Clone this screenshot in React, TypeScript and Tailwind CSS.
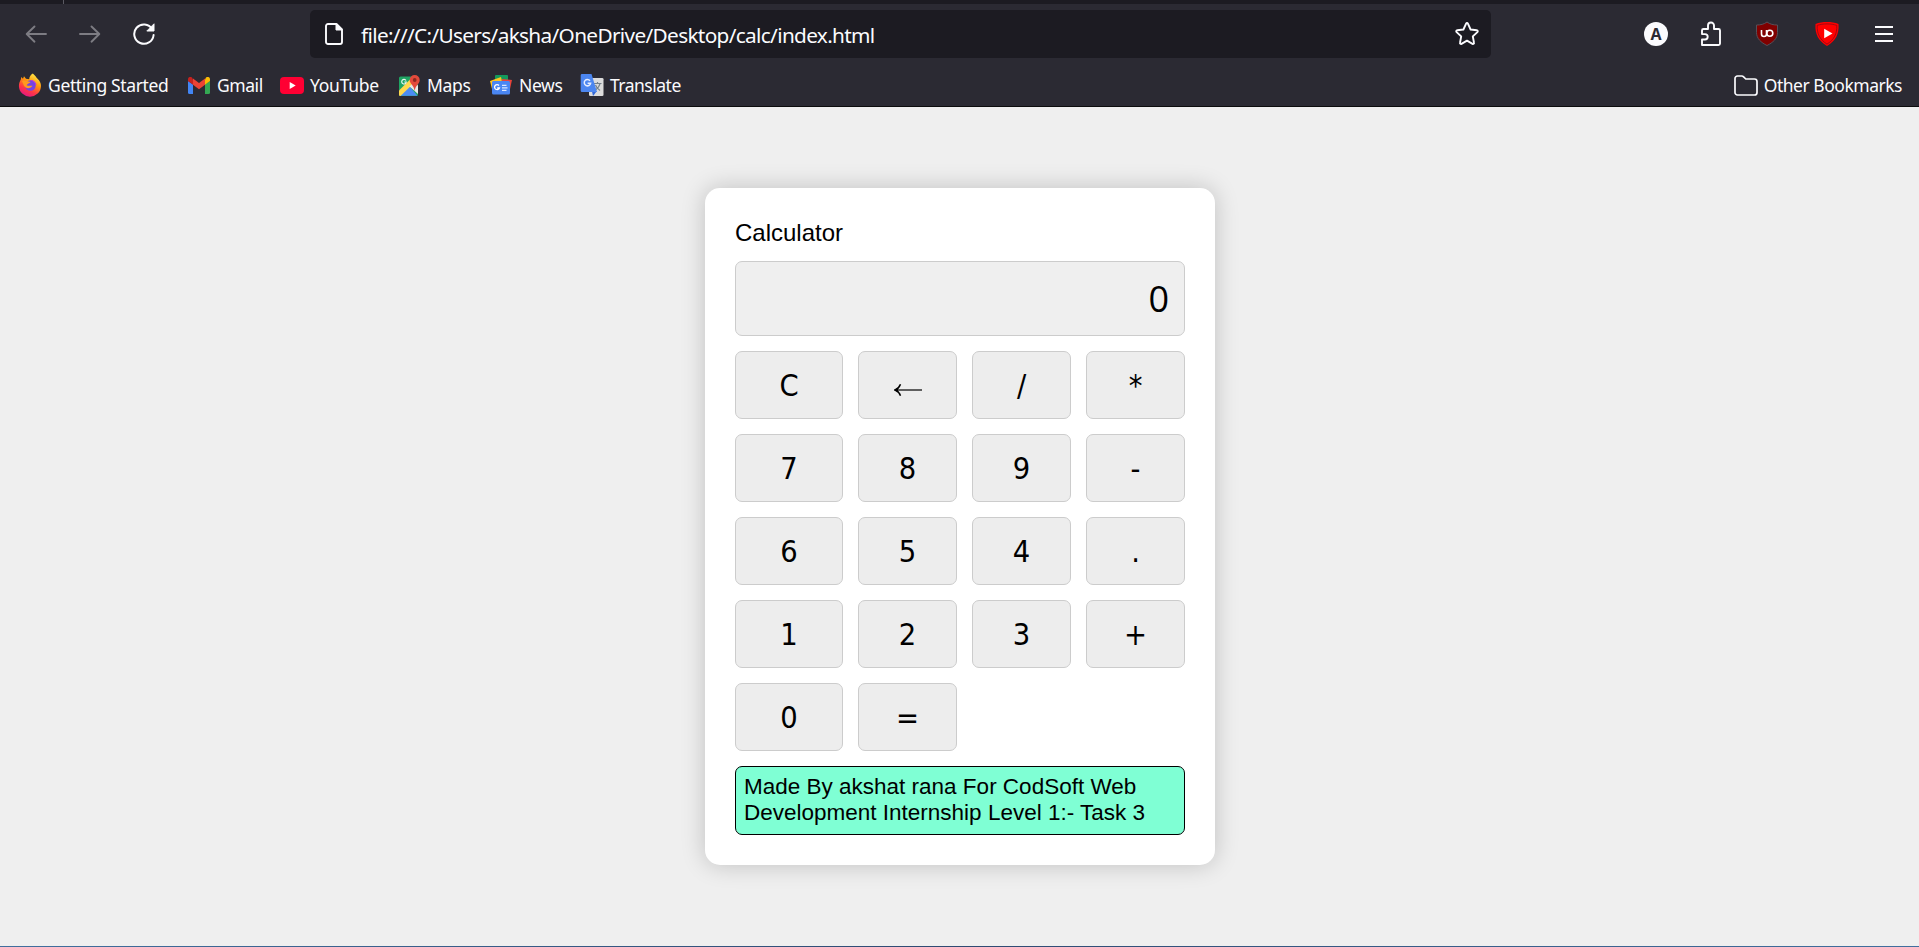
import React from 'react';

const ui = "font-['Noto_Sans',sans-serif]";

function Back({ flip = false }: { flip?: boolean }) {
  return (
    <svg width="24" height="24" viewBox="0 0 24 24" className={flip ? '-scale-x-100' : ''} fill="none" stroke="#7d7c83" strokeWidth="1.9" strokeLinecap="round" strokeLinejoin="round">
      <path d="M22 12H3M10.5 4.5 2.7 12l7.8 7.7" />
    </svg>
  );
}

function Reload() {
  return (
    <svg width="24" height="24" viewBox="0 0 24 24" fill="none" stroke="#fbfbfe" strokeWidth="2" strokeLinecap="round">
      <path d="M20.2 7A9.700 9.700 0 1 0 21.600 13" />
      <path d="M22 2.200V9h-6.800z" fill="#fbfbfe" strokeWidth="1" strokeLinejoin="round" />
    </svg>
  );
}

function Page() {
  return (
    <svg width="18" height="22" viewBox="0 0 18 22" fill="none" stroke="#fbfbfe" strokeWidth="1.9" strokeLinejoin="round">
      <path d="M3 1h8.500L17 6.500V19a2 2 0 0 1-2 2H3a2 2 0 0 1-2-2V3a2 2 0 0 1 2-2z" />
      <path d="M11 1v6h6z" fill="#fbfbfe" strokeWidth="1" />
    </svg>
  );
}

function Star() {
  return (
    <svg width="26" height="26" viewBox="0 0 26 26" fill="none" stroke="#fbfbfe" strokeWidth="1.9" strokeLinejoin="round">
      <path d="M12.100 2.600c.4-.8 1.400-.8 1.800 0l2.700 5.900 6.200.8c1 .1 1.300 1.100.6 1.800l-4.600 4.300 1.200 6.300c.2.9-.7 1.500-1.500 1.100L13 19.700l-5.500 3.100c-.8.4-1.700-.2-1.500-1.100l1.200-6.300-4.600-4.300c-.7-.7-.4-1.700.6-1.800l6.200-.8z" />
    </svg>
  );
}

function Puzzle() {
  return (
    <svg width="22" height="26" viewBox="0 0 22 26" fill="none" stroke="#fbfbfe" strokeWidth="1.9" strokeLinejoin="round" strokeLinecap="round">
      <path d="M2 11V9.500A1.500 1.500 0 0 1 3.500 8H8V4.500a3 3 0 0 1 6 0V8h4.500A1.500 1.500 0 0 1 20 9.500v13a1.500 1.500 0 0 1-1.500 1.500H2v-5.500h3a2.700 2.700 0 0 0 0-5.400H2z" />
    </svg>
  );
}

function Ublock() {
  return (
    <svg width="24" height="26" viewBox="0 0 24 26">
      <path d="M12 1c3 2.300 6.500 3 10.500 3v7.500c0 6-4.500 10-10.500 13-6-3-10.500-7-10.500-13V4C5.500 4 9 3.300 12 1z" fill="#800000" stroke="#555059" strokeWidth="1" />
      <path d="M6.500 9v4a2.500 2.500 0 0 0 5 0V9" fill="none" stroke="#fff" strokeWidth="1.6" />
      <circle cx="14.8" cy="12.3" r="3" fill="none" stroke="#fff" strokeWidth="1.6" />
    </svg>
  );
}

function Enhancer() {
  return (
    <svg width="26" height="26" viewBox="0 0 26 26">
      <path d="M13 1c4 0 8 .6 11.500 2 .8 10-3 17-11.500 22C4.500 20 .7 13 1.500 3 5 1.600 9 1 13 1z" fill="#f00" />
      <path d="M13 2.900c3.600 0 6.800.5 9.800 1.500.4 8.400-2.800 14.300-9.800 18.700C6 18.700 2.800 12.800 3.200 4.400 6.200 3.400 9.400 2.900 13 2.900z" fill="none" stroke="#8b0a14" strokeWidth=".8" />
      <path d="M10.200 7.700v9.600l8.300-4.800z" fill="#fff" />
    </svg>
  );
}

function Firefox() {
  return (
    <svg width="24" height="24" viewBox="0 0 24 24">
      <defs>
        <linearGradient id="ff" x1=".8" y1="0" x2=".3" y2="1">
          <stop offset="0" stopColor="#fff44f" />
          <stop offset=".4" stopColor="#ff980e" />
          <stop offset=".72" stopColor="#ff3647" />
          <stop offset="1" stopColor="#e31587" />
        </linearGradient>
      </defs>
      <path d="M14.800.5c2.500 2 3.200 3.800 5 5.500 2 1.800 3.200 4.500 3.200 7A11 11 0 0 1 12 23.700 11 11 0 0 1 .9 13c0-2.700 1-5 2-6.700L3.200 4 5 5.700 6 3.300l2 2.400 3.200.6c0-2.500 1.500-4.500 3.600-5.800z" fill="url(#ff)" />
      <circle cx="12.400" cy="12.500" r="5.300" fill="#7543e5" />
      <path d="M4 8c3-1 5 .2 8.500 1-1 1.700-3.200 1.500-3.800 3.200 1.500 1.200 4.500.2 5.800.6-1.700 2.800-6.500 3.600-8.500 0z" fill="#ff9a1f" />
      <path d="M13 7.500c2 0 4.500 1.500 4.900 4.500" fill="none" stroke="#b833e1" strokeWidth="1.2" />
    </svg>
  );
}

function Gmail() {
  return (
    <svg width="22" height="17" viewBox="0 0 22 17">
      <path d="M0 4v11.500A1.500 1.500 0 0 0 1.500 17H5V7.500z" fill="#4285f4" />
      <path d="M22 4v11.500a1.500 1.500 0 0 1-1.500 1.500H17V7.500z" fill="#34a853" />
      <path d="M17 2.500v5.200l5-3.700V2.200C22 .2 19.700-.8 18 .5z" fill="#fbbc04" />
      <path d="M5 2.500v5.200L0 4V2.200C0 .2 2.300-.8 4 .5z" fill="#c5221f" />
      <path d="M5 1.500 11 6l6-4.500v6.200l-6 4.500-6-4.500z" fill="#ea4335" />
    </svg>
  );
}

function YouTube() {
  return (
    <svg width="24" height="17" viewBox="0 0 24 17">
      <rect width="24" height="17" rx="4" fill="#ff0033" />
      <path d="M9.700 5v7l6-3.500z" fill="#fff" />
    </svg>
  );
}

function Maps() {
  return (
    <svg width="22" height="23" viewBox="0 0 22 23">
      <rect x="1" y="2.500" width="19" height="19.500" rx="1.500" fill="#1fa463" />
      <path d="M2 21.700 11 12l8.500 9.700z" fill="#4c8bf5" />
      <path d="m1 16.500 13-13 3.500 4L2.500 22C1.700 22 1 21.500 1 20.500z" fill="#ffd84d" />
      <path d="m11.500 12.500 4-4 4.500 3v8.500z" fill="#e8e8e8" />
      <path d="M8 6.500A2.300 2.300 0 1 0 8.300 8H6.300" fill="none" stroke="#e9f5ee" strokeWidth="1.2" />
      <path d="M16.700 1a5 5 0 0 1 5 5c0 4-4.300 5-5 11-.7-6-5-7-5-11a5 5 0 0 1 5-5z" fill="#e34a3c" />
      <circle cx="16.700" cy="6" r="1.900" fill="#8b2a22" />
    </svg>
  );
}

function News() {
  return (
    <svg width="22" height="20" viewBox="0 0 22 20">
      <rect x="5" y="0" width="13" height="12" rx="1" fill="#149a5b" />
      <path d="m0 6 11-4 2 9-11 3z" fill="#ffc51f" />
      <path d="m12 4 10 1-2 9-9-1z" fill="#e9433a" />
      <rect x="2" y="6" width="18" height="13.500" rx="1.500" fill="#4a86f3" />
      <path d="M9 10.500A2.500 2.500 0 1 0 9.400 13H7.200" fill="none" stroke="#fff" strokeWidth="1.3" />
      <path d="M12 10.300h4.500M12 12.800h5.500M12 15.300h4.500" stroke="#dce8ff" strokeWidth="1.2" />
    </svg>
  );
}

function Translate() {
  return (
    <svg width="24" height="24" viewBox="0 0 24 24">
      <rect x="9" y="5" width="14.500" height="18" rx="1.300" fill="#dcdcdc" />
      <path d="M14 10.500h7.500M17.500 9v1.500M20 10.500c-.5 3-2.500 5-4.500 6.500M15.500 12c1 2.500 2.500 4 4.500 5.500" fill="none" stroke="#75808a" strokeWidth="1.2" />
      <path d="m12 18.500 5-.5-4 5z" fill="#3367d6" />
      <path d="M2 1h9.500l5.500 18H2a1.300 1.300 0 0 1-1.300-1.300V2.300A1.300 1.300 0 0 1 2 1z" fill="#4c86f0" />
      <path d="M10 7.700a3.200 3.200 0 1 0 .6 2.600H7.600" fill="none" stroke="#e6eeff" strokeWidth="1.5" />
    </svg>
  );
}

function Folder() {
  return (
    <svg width="24" height="21" viewBox="0 0 24 21" fill="none" stroke="#fbfbfe" strokeWidth="1.7" strokeLinejoin="round">
      <path d="M1 17.500v-14A2.500 2.500 0 0 1 3.500 1h4.300c.7 0 1.300.3 1.800.8L11.800 4h8.700A2.500 2.500 0 0 1 23 6.500v11a2.500 2.500 0 0 1-2.500 2.500h-17A2.500 2.500 0 0 1 1 17.500z" />
    </svg>
  );
}

function Backspace() {
  return (
    <svg width="28" height="14" viewBox="0 0 28 14" className="mt-[7px]" fill="none" stroke="#000">
      <path d="M1 7h27" strokeWidth="1.2" />
      <path d="M6.500 1.300C5.500 4 3.500 6 1 7c2.500 1 4.500 3 5.500 5.700" strokeWidth="1.5" />
      <path d="M.3 7 5 4.200 3.800 7 5 9.800z" fill="#000" stroke="none" />
    </svg>
  );
}

const bookmarks = [
  { label: 'Getting Started', icon: <Firefox />, box: 'w-[170px] gap-[6px]', track: 'tracking-[-0.36px]' },
  { label: 'Gmail', icon: <Gmail />, box: 'w-[92px] gap-[7px]', track: 'tracking-[-0.45px]' },
  { label: 'YouTube', icon: <YouTube />, box: 'w-[118px] gap-[6px]', track: 'tracking-[-0.25px]' },
  { label: 'Maps', icon: <Maps />, box: 'w-[92px] gap-[7px]', track: 'tracking-[-0.35px]' },
  { label: 'News', icon: <News />, box: 'w-[90px] gap-[7px]', track: 'tracking-[-0.35px]' },
  { label: 'Translate', icon: <Translate />, box: 'w-[110px] gap-[6px]', track: 'tracking-[-0.5px]' },
];

const keys = ['C', '←', '/', '*', '7', '8', '9', '-', '6', '5', '4', '.', '1', '2', '3', '+', '0', '='];

export default function App() {
  return (
    <div className="flex h-[947px] w-[1919px] flex-col overflow-hidden bg-[#efefef] text-black">
      <header className={`flex h-[107px] shrink-0 flex-col border-b border-[#0c0c0d] bg-[#2b2a33] text-[#fbfbfe] ${ui}`}>
        <div className="flex h-1 bg-[#1c1b22] pl-[63px]">
          <div className="h-1 w-px bg-[#5b5a63]" />
        </div>
        <div className="flex h-[60px] items-center">
          <div className="flex w-[310px] items-center pl-6">
            <Back />
            <div className="w-[30px]" />
            <Back flip />
            <div className="w-[30px]" />
            <Reload />
          </div>
          <div className="flex h-12 w-[1181px] items-center rounded-[5px] bg-[#1c1b22] pr-[11px] pl-[15px]">
            <Page />
            <div className="ml-[18px] flex-1 pt-[2px] text-[20.8px] leading-[30px] tracking-[-0.67px] whitespace-nowrap">file:///C:/Users/aksha/OneDrive/Desktop/calc/index.html</div>
            <Star />
          </div>
          <div className="ml-[153px] flex items-center">
            <div className="flex size-6 items-center justify-center rounded-full bg-[#fbfbfe] font-['Open_Sans',sans-serif] text-[16px] leading-none font-bold text-[#2b2a33]">A</div>
            <div className="ml-[32px]"><Puzzle /></div>
            <div className="ml-[33px]"><Ublock /></div>
            <div className="ml-[35px]"><Enhancer /></div>
            <svg className="ml-[35px]" width="18" height="16" viewBox="0 0 18 16" stroke="#fbfbfe" strokeWidth="1.8">
              <path d="M0 1h18M0 8h18M0 15h18" />
            </svg>
          </div>
        </div>
        <div className="flex h-[42px] items-center pl-[18px] text-[17.5px] leading-6">
          {bookmarks.map((b) => (
            <div key={b.label} className={`flex shrink-0 items-center whitespace-nowrap ${b.box}`}>
              {b.icon}
              <span className={b.track}>{b.label}</span>
            </div>
          ))}
          <div className="mr-[17px] ml-auto flex items-center gap-[6px] whitespace-nowrap">
            <Folder />
            <span className="tracking-[-0.48px]">Other Bookmarks</span>
          </div>
        </div>
      </header>

      <main className="flex flex-1 items-start justify-center pt-[81px] pl-px">
        <section className="h-[677px] w-[510px] rounded-[15px] bg-white px-[30px] pt-[30px] font-['Liberation_Sans',Arial,sans-serif] shadow-[0_0_24px_rgba(0,0,0,0.2)]">
          <h1 className="h-[43px] text-[24px] leading-[30px]">Calculator</h1>
          <div className="flex h-[75px] items-center justify-end rounded-[7px] border border-[#ccc] bg-[#efefef] pr-[15px] font-['Open_Sans',sans-serif] text-[36px] leading-none">0</div>
          <div className="mt-[15px] grid auto-rows-[68px] grid-cols-[108px_99px_99px_99px] gap-[15px]">
            {keys.map((k) => (
              <button key={k} aria-label={k} className="flex items-center justify-center rounded-[7px] border border-[#ccc] bg-[#ededed] pt-[3px] font-['DejaVu_Sans_Condensed','DejaVu_Sans',sans-serif] text-[30.5px] leading-none [font-stretch:condensed]">
                {k === '←' ? <Backspace /> : k}
              </button>
            ))}
          </div>
          <p className="mt-[15px] h-[69px] rounded-[7px] border border-black bg-[#7fffd4] px-2 pt-[7px] text-[22.5px] leading-[26px]">
            Made By akshat rana For CodSoft Web<br />Development Internship Level 1:- Task 3
          </p>
        </section>
      </main>
      <div className="h-px shrink-0 bg-linear-to-r from-[#416f9e] via-[#2f4a72] to-[#416f9e]" />
    </div>
  );
}
